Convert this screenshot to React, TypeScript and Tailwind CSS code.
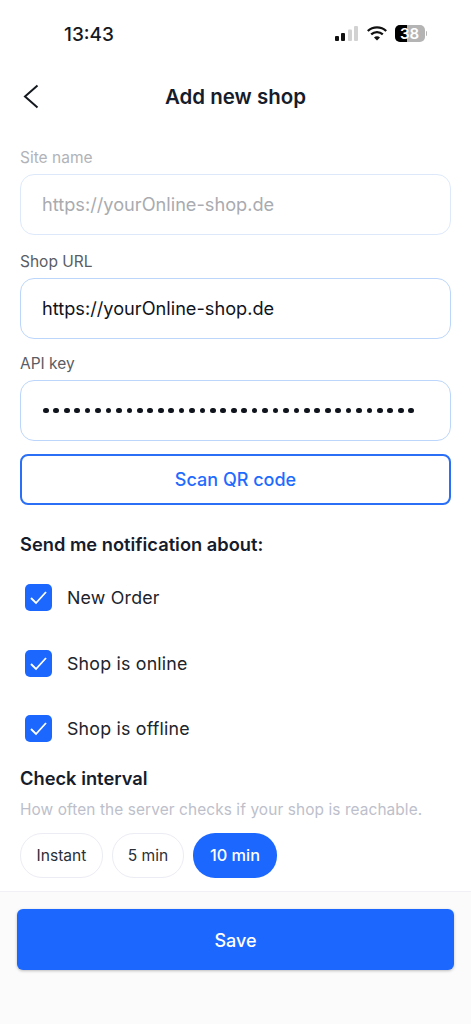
function StatusBar() {
  return (
    <div className="flex h-[70px] items-center justify-between pl-[64px] pr-[44px]">
      <span className="text-[19px] font-medium text-[#14181f]">13:43</span>
      <div className="mb-[4px] flex items-center gap-[8px]">
        <svg width="24" height="15" viewBox="0 0 24 15">
          <rect x="0" y="10" width="4" height="5" rx="1" fill="#111" />
          <rect x="6" y="7" width="4" height="8" rx="1" fill="#111" />
          <rect x="13" y="3.5" width="4" height="11.5" rx="1" fill="#d2d2d2" />
          <rect x="19" y="0" width="4" height="15" rx="1" fill="#d2d2d2" />
        </svg>
        <svg width="20" height="15" viewBox="0 0 20 15">
          <path d="M0.8 5 A13.5 13.5 0 0 1 19.2 5" fill="none" stroke="#111" strokeWidth="2.3" />
          <path d="M4.2 8.4 A8.6 8.6 0 0 1 15.8 8.4" fill="none" stroke="#111" strokeWidth="2.3" />
          <path d="M7 11.4 A4.2 4.2 0 0 1 13 11.4 L10 14.6 Z" fill="#111" />
        </svg>
        <div className="flex items-center gap-[1px]">
          <div className="relative h-[17px] w-[30px] overflow-hidden rounded-[5px] bg-[#b4b4b4]">
            <div className="h-full w-[12px] bg-black" />
            <span className="absolute inset-0 flex items-center justify-center text-[15px] leading-none font-semibold text-white">38</span>
          </div>
          <div className="h-[5px] w-[1.5px] rounded-r bg-[#b4b4b4]" />
        </div>
      </div>
    </div>
  );
}

function Field({ label, value, muted, focused, secret }: { label: string; value: string; muted?: boolean; focused?: boolean; secret?: boolean }) {
  return (
    <div>
      <label className={`block pt-[1px] text-[15.5px] leading-[18px] ${muted ? 'text-[#b1b3b8]' : 'text-[#5a5d63]'}`}>{label}</label>
      <div className={`mt-[7px] flex h-[61px] items-center rounded-[14px] border bg-white px-[21px] ${focused ? 'border-[#bcd6fb]' : 'border-[#dde9fb]'}`}>
        {secret ? (
          <div className="flex gap-[4.75px] pl-[1px]">
            {Array.from({ length: 36 }).map((_, i) => (
              <span key={i} className="h-[5.7px] w-[5.7px] rounded-full bg-[#10141c]" />
            ))}
          </div>
        ) : (
          <span className={`text-[18.2px] ${muted ? 'text-[#a9abb0]' : 'text-[#10141c]'}`}>{value}</span>
        )}
      </div>
    </div>
  );
}

function CheckRow({ label }: { label: string }) {
  return (
    <div className="flex h-[27px] items-center gap-[15px] pl-[5px]">
      <span className="flex h-[27px] w-[27px] items-center justify-center rounded-[5px] bg-[#1c68ff]">
        <svg width="19" height="15" viewBox="0 0 19 15" fill="none">
          <path d="M2 8 L7 13 L17 2" stroke="white" strokeWidth="1.8" />
        </svg>
      </span>
      <span className="pt-[2px] text-[17.8px] tracking-[0.2px] text-[#20242c]">{label}</span>
    </div>
  );
}

export default function App() {
  return (
    <div className="flex h-[1024px] w-[471px] flex-col overflow-hidden bg-white font-['Inter',sans-serif]">
      <StatusBar />

      <header className="relative flex h-[54px] items-center justify-center">
        <button className="absolute top-[14px] left-[23px] text-[#14181f]">
          <svg width="16" height="25" viewBox="0 0 16 25" fill="none">
            <path d="M14.5 1.5 L2 12.5 L14.5 23.5" stroke="currentColor" strokeWidth="2" />
          </svg>
        </button>
        <h1 className="text-[20.5px] font-semibold text-[#161c2b]">Add new shop</h1>
      </header>

      <main className="flex-1 px-[20px] pt-[24px]">
        <Field label="Site name" value="https://yourOnline-shop.de" muted />
        <div className="mt-[17px]">
          <Field label="Shop URL" value="https://yourOnline-shop.de" focused />
        </div>
        <div className="mt-[15px]">
          <Field label="API key" value="" focused secret />
        </div>
        <button className="mt-[13px] h-[51px] w-full rounded-[8px] border-2 border-[#2a6ff5] text-[18px] font-medium text-[#1f6bff]">
          Scan QR code
        </button>

        <h2 className="mt-[28px] text-[18.3px] leading-[22px] font-semibold text-[#161c2b]">Send me notification about:</h2>
        <div className="mt-[29px] flex flex-col gap-[38.5px]">
          <CheckRow label="New Order" />
          <CheckRow label="Shop is online" />
          <CheckRow label="Shop is offline" />
        </div>

        <h2 className="mt-[25px] text-[18.3px] leading-[22px] font-semibold text-[#161c2b]">Check interval</h2>
        <p className="mt-[12px] text-[15.4px] leading-[18px] tracking-[0.1px] whitespace-nowrap text-[#bdc0cb]">How often the server checks if your shop is reachable.</p>
        <div className="mt-[14px] flex gap-[9px]">
          <button className="h-[45px] w-[83px] rounded-[22px] border border-[#ecedf4] bg-white text-[15.6px] text-[#2b2f38]">Instant</button>
          <button className="h-[45px] w-[72px] rounded-[22px] border border-[#ecedf4] bg-white text-[15.6px] text-[#2b2f38]">5 min</button>
          <button className="h-[45px] w-[84px] rounded-[22px] bg-[#1c68ff] text-[16.3px] font-medium text-white">10 min</button>
        </div>
      </main>

      <footer className="h-[133px] border-t border-[#f0f0f6] bg-[#fbfbfc] px-[17px] pt-[17px]">
        <button className="h-[61px] w-full rounded-[6px] bg-[#1c68ff] pt-[2px] text-[18px] font-medium text-white shadow-[0_1px_3px_rgba(0,0,0,0.25)]">
          Save
        </button>
      </footer>
    </div>
  );
}
